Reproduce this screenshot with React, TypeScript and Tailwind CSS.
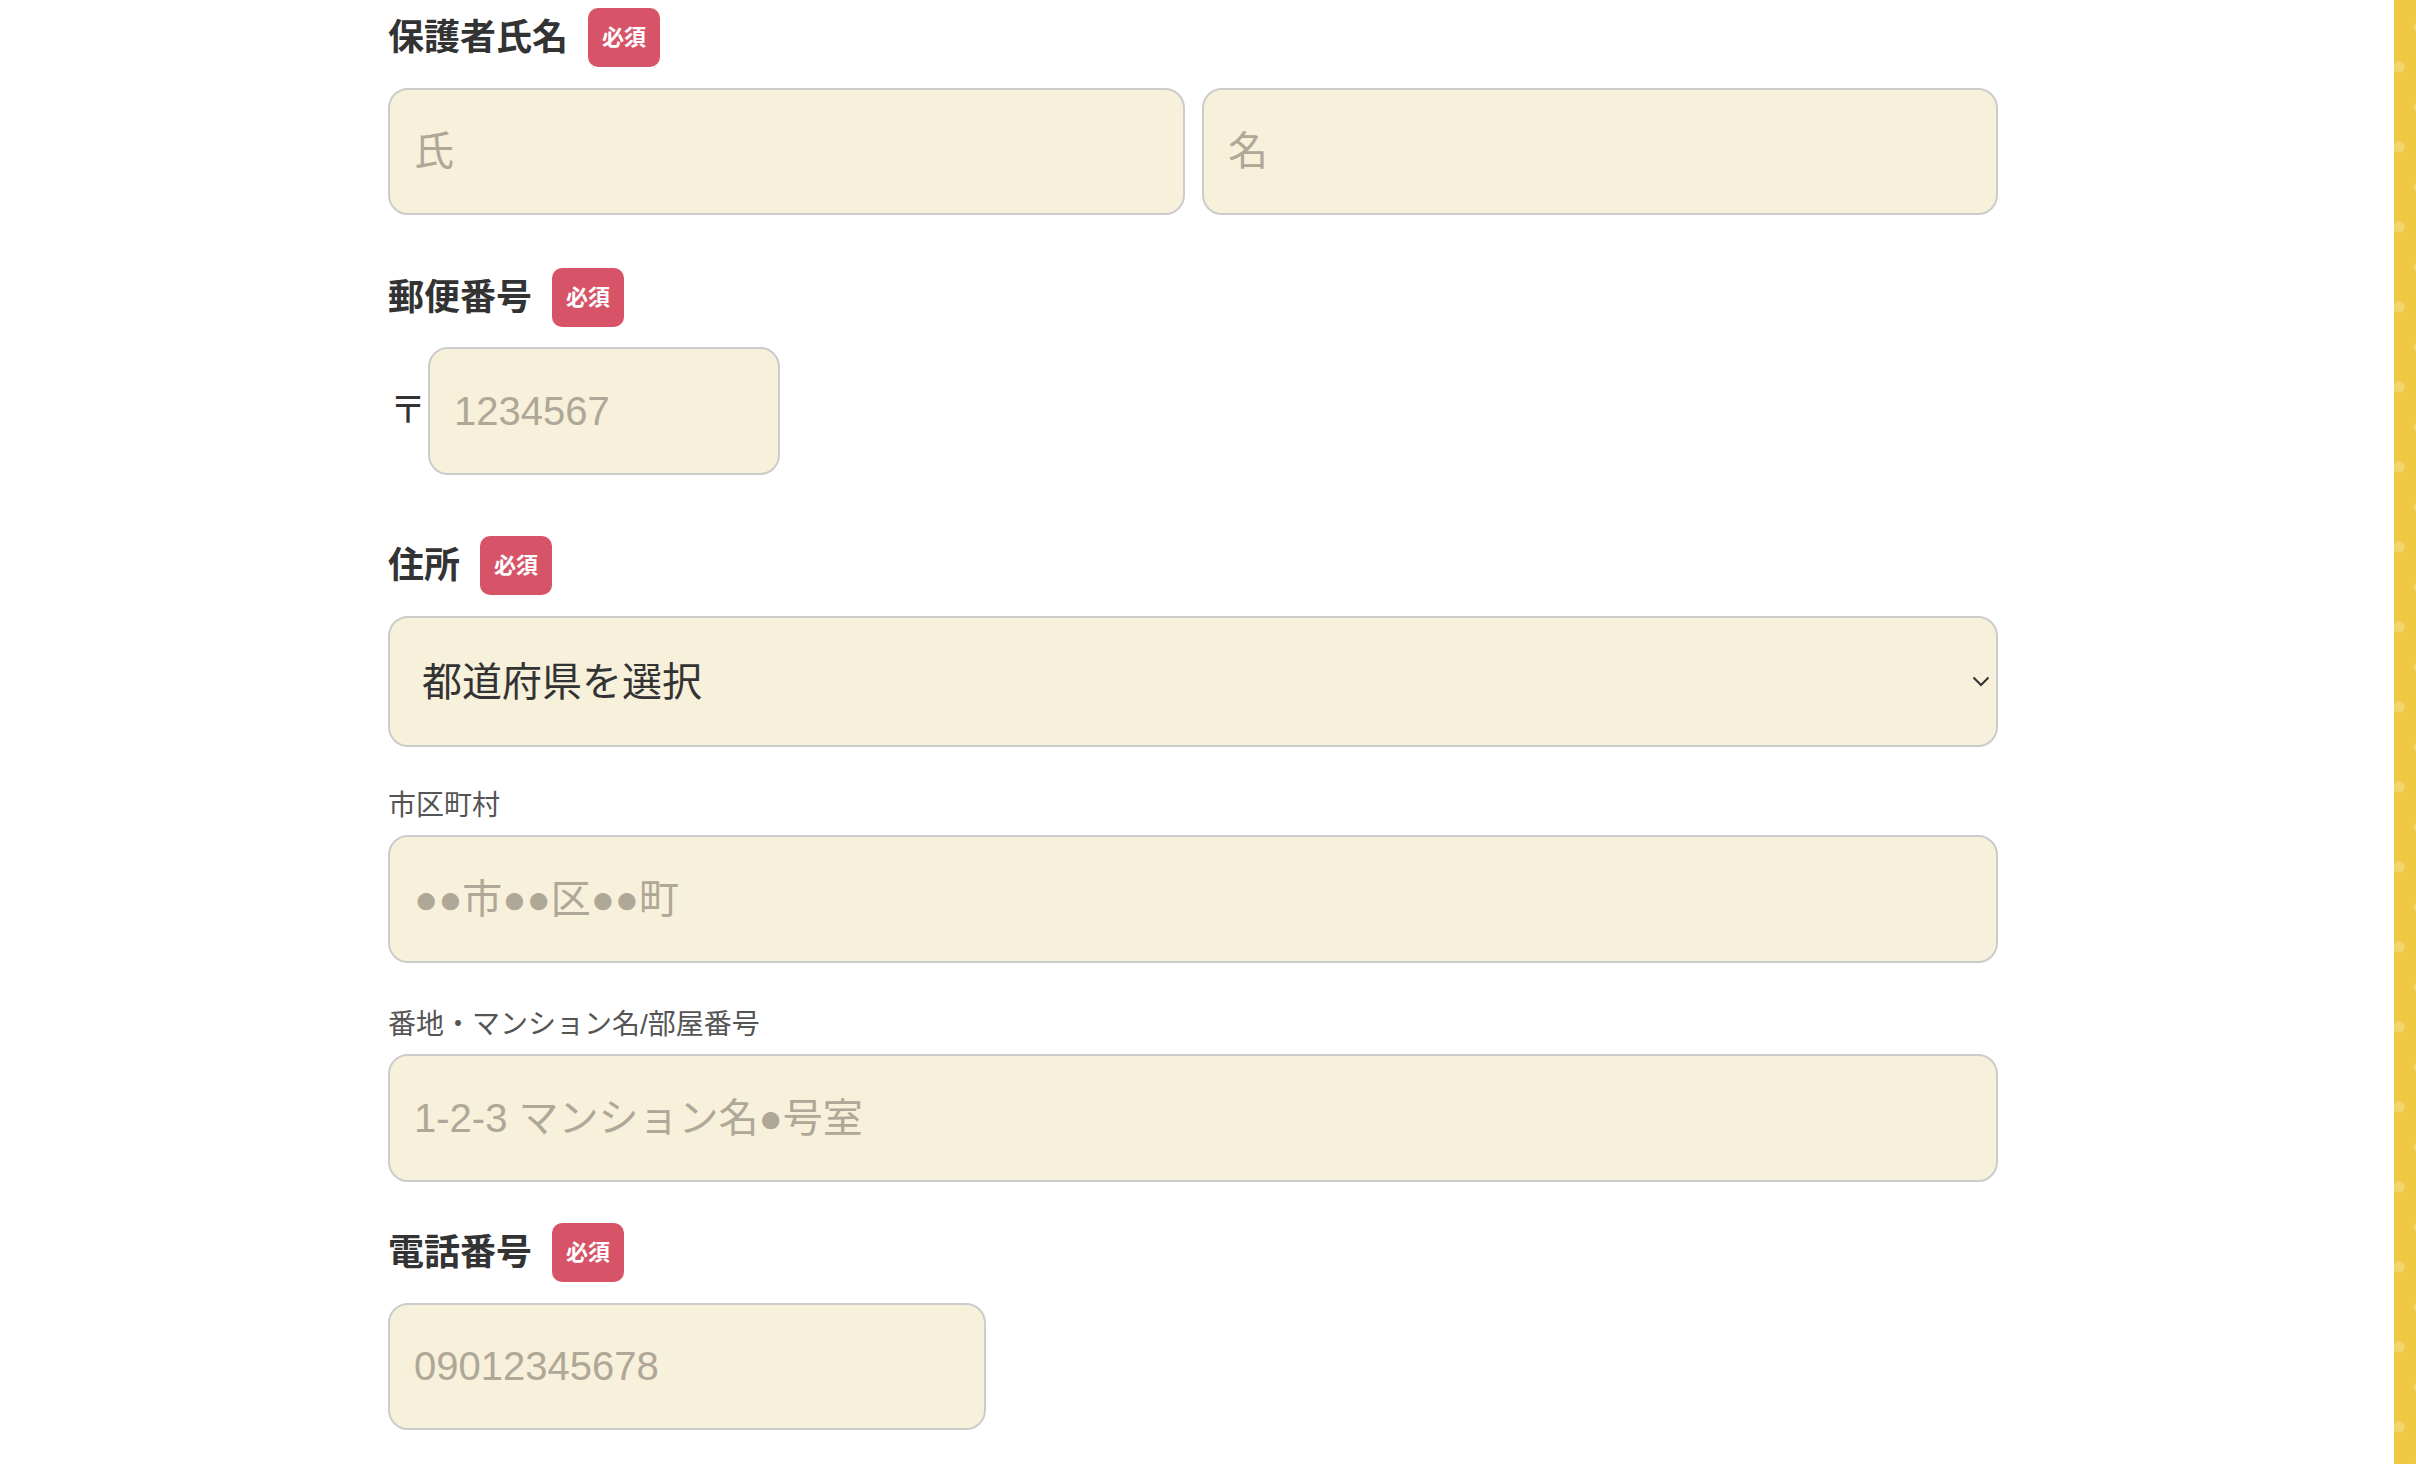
import React from "react";

const FONT = { fontFamily: '"Liberation Sans", "Noto Sans CJK JP", sans-serif' };

function Badge() {
  return (
    <span className="inline-flex h-[59px] w-[72px] items-center justify-center rounded-[10px] bg-[#d75468] text-[22px] font-bold leading-none text-white">
      必須
    </span>
  );
}

function FieldLabel({ children }: { children: React.ReactNode }) {
  return (
    <div className="flex h-[59px] items-center gap-[20px]">
      <span className="text-[36px] font-bold leading-none text-[#333333]">{children}</span>
      <Badge />
    </div>
  );
}

const inputCls =
  "h-[127px] rounded-[20px] border-2 border-[#cccccc] bg-[#f7f0da] px-6 text-[40px] text-[#333333] outline-none placeholder:text-[#afa797]";

export default function App() {
  return (
    <div className="flex h-[1464px] w-full overflow-hidden bg-white" style={FONT}>
      <div className="flex-1 overflow-hidden">
        <div className="ml-[388px] w-[1610px] pt-[8px]">
          {/* 保護者氏名 */}
          <FieldLabel>保護者氏名</FieldLabel>
          <div className="mt-[21px] flex gap-[17px]">
            <input className={`${inputCls} w-[797px]`} placeholder="氏" />
            <input className={`${inputCls} w-[796px]`} placeholder="名" />
          </div>

          {/* 郵便番号 */}
          <div className="mt-[53px]">
            <FieldLabel>郵便番号</FieldLabel>
          </div>
          <div className="mt-[20px] flex items-center gap-[2px]">
            <span className="pl-[2px] text-[36px] leading-none text-[#333333]">〒</span>
            <input className={`${inputCls} h-[128px] w-[352px]`} placeholder="1234567" />
          </div>

          {/* 住所 */}
          <div className="mt-[61px]">
            <FieldLabel>住所</FieldLabel>
          </div>
          <div className="relative mt-[21px]">
            <select
              className="h-[131px] w-[1610px] appearance-none rounded-[20px] border-2 border-[#cccccc] bg-[#f7f0da] pl-[32px] text-[40px] text-[#333333] outline-none"
              defaultValue=""
            >
              <option value="">都道府県を選択</option>
            </select>
            <svg
              className="pointer-events-none absolute right-[8px] top-[60px]"
              width="18"
              height="11"
              viewBox="0 0 18 11"
              fill="none"
            >
              <path d="M1.5 1.5 L9 9 L16.5 1.5" stroke="#333333" strokeWidth="2" />
            </svg>
          </div>

          <div className="mt-[45px] text-[28px] leading-[28px] text-[#555555]">市区町村</div>
          <input className={`${inputCls} mt-[15px] block h-[128px] w-[1610px]`} placeholder="●●市●●区●●町" />

          <div className="mt-[48px] text-[28px] leading-[28px] text-[#555555]">番地・マンション名/部屋番号</div>
          <input className={`${inputCls} mt-[15px] block h-[128px] w-[1610px]`} placeholder="1-2-3 マンション名●号室" />

          {/* 電話番号 */}
          <div className="mt-[41px]">
            <FieldLabel>電話番号</FieldLabel>
          </div>
          <input className={`${inputCls} mt-[21px] block h-[127px] w-[598px]`} placeholder="09012345678" />
        </div>
      </div>
      <div
        className="w-[22px] shrink-0 bg-[#efc944]"
        style={{
          backgroundImage:
            "radial-gradient(circle, rgba(255,255,255,0.22) 5px, transparent 6px), radial-gradient(circle, rgba(255,255,255,0.22) 5px, transparent 6px)",
          backgroundSize: "40px 80px, 40px 80px",
          backgroundPosition: "-15px 27px, 5px -13px",
        }}
      />
    </div>
  );
}
